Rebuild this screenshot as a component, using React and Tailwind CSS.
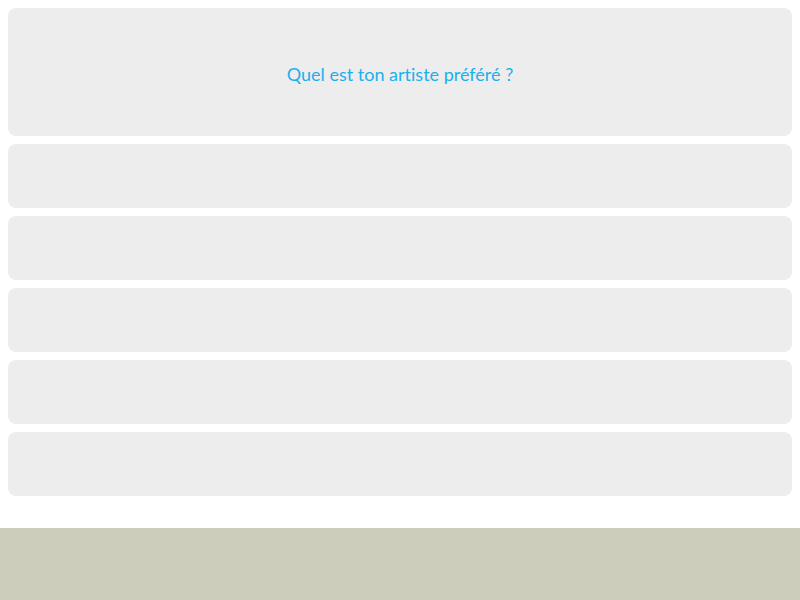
import React from "react";

const answers = [1, 2, 3, 4, 5];

const App = () => {
  return (
    <div className="min-h-[600px] flex flex-col bg-white" style={{ fontFamily: "Lato, 'Open Sans', sans-serif" }}>
      <div className="flex flex-col gap-2 p-2">
        <div className="h-32 rounded-lg bg-[#ededed] flex items-center justify-center pt-1">
          <span className="text-[18px] text-[#1ab0ec] [font-variant-ligatures:none]">Quel est ton artiste préféré ?</span>
        </div>
        {answers.map((a) => (
          <div key={a} className="h-16 rounded-lg bg-[#ededed]" />
        ))}
      </div>
      <div className="mt-6 h-[72px] bg-[#cccdbb]" />
    </div>
  );
};

export default App;
